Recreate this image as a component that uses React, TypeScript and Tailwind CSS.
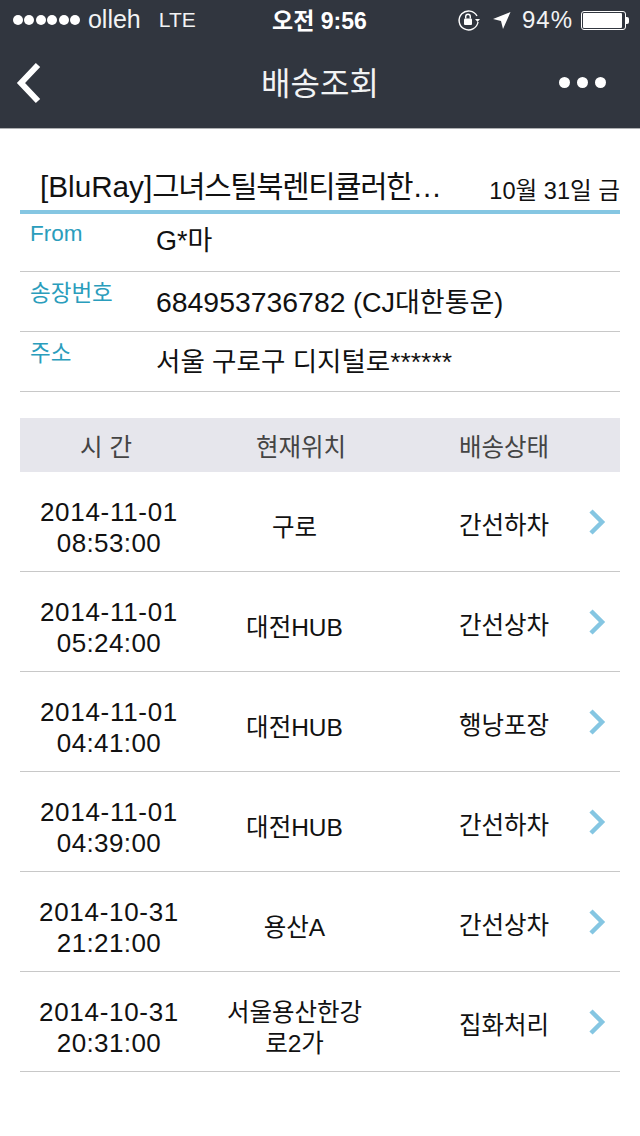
const rows = [
  { date: '2014-11-01', time: '08:53:00', place: ['구로'], status: '간선하차' },
  { date: '2014-11-01', time: '05:24:00', place: ['대전HUB'], status: '간선상차' },
  { date: '2014-11-01', time: '04:41:00', place: ['대전HUB'], status: '행낭포장' },
  { date: '2014-11-01', time: '04:39:00', place: ['대전HUB'], status: '간선하차' },
  { date: '2014-10-31', time: '21:21:00', place: ['용산A'], status: '간선상차' },
  { date: '2014-10-31', time: '20:31:00', place: ['서울용산한강', '로2가'], status: '집화처리' },
];

function InfoRow({ label, rowClass, labelClass, children }: { label: string; rowClass: string; labelClass: string; children: React.ReactNode }) {
  return (
    <div className={`flex border-b border-[#c8c8c8] ${rowClass}`}>
      <span className={`w-[136px] pl-[10px] text-[22.5px] leading-[30px] text-[#2a9dbc] ${labelClass}`}>{label}</span>
      {children}
    </div>
  );
}

function StatusBar() {
  return (
    <div className="flex h-10 items-center justify-between pl-[13px] pr-[11px] text-[24px] text-[#f2f3f4]">
      <div className="flex items-center">
        <div className="flex gap-[1.4px]">
          {[0, 1, 2, 3, 4, 5].map((i) => (
            <span key={i} className="h-2.5 w-2.5 rounded-full bg-white" />
          ))}
        </div>
        <span className="ml-2 text-[25px]">olleh</span>
        <span className="ml-[18px] text-[21px] font-light">LTE</span>
      </div>
      <div className="absolute left-[272px] top-[6px] text-[23px] font-bold leading-[30px] text-white">오전 9:56</div>
      <div className="flex items-center">
        <svg width="24" height="24" viewBox="0 0 24 24" fill="none" stroke="white" strokeWidth="1.4">
          <path d="M20 8A9.5 9.5 0 1 0 21 14" />
          <path d="M18 11h5l-2.5 3z" fill="white" stroke="none" />
          <rect x="7" y="10.5" width="8" height="6.5" rx="1" fill="white" stroke="none" />
          <path d="M8.7 10.5V8.5a2.3 2.3 0 0 1 4.6 0v2" />
        </svg>
        <svg className="ml-[11px]" width="19" height="19" viewBox="0 0 19 19">
          <path d="M18.5 1 L11 18 L9 10 L1 8 Z" fill="white" />
        </svg>
        <span className="ml-[11px] text-[24px] tracking-[1px]">94%</span>
        <div className="ml-[8px] flex items-center">
          <div className="h-[19px] w-[45px] rounded-[3px] border border-white p-[1px]">
            <div className="h-full w-[94%] rounded-[1px] bg-white" />
          </div>
          <div className="h-[7px] w-[3px] rounded-r-[2px] bg-white" />
        </div>
      </div>
    </div>
  );
}

function NavBar() {
  return (
    <div className="relative flex h-[88px] items-center justify-between pb-[3px] pl-[16px] pr-[34px]">
      <svg width="26" height="42" viewBox="0 0 26 42" fill="none" stroke="white" strokeWidth="6">
        <path d="M22 3 L5 21 L22 39" />
      </svg>
      <div className="absolute inset-x-0 top-[24px] text-center text-[32px] leading-[40px] text-[#f2f3f4]">배송조회</div>
      <div className="flex gap-[7px]">
        <span className="h-[11px] w-[11px] rounded-full bg-white" />
        <span className="h-[11px] w-[11px] rounded-full bg-white" />
        <span className="h-[11px] w-[11px] rounded-full bg-white" />
      </div>
    </div>
  );
}

export default function App() {
  return (
    <div
      className="relative h-[1136px] w-[640px] overflow-hidden bg-white"
      style={{ fontFamily: '"Liberation Sans", "Noto Sans CJK KR", sans-serif' }}
    >
      <div className="h-[129px] border-b border-[#aeb0b2] bg-[#31363f]">
        <StatusBar />
        <NavBar />
      </div>

      <div className="px-5 pt-[42px]">
        <div className="flex h-[43px] items-start justify-between border-b-4 border-[#85c6e2] pl-5">
          <span className="whitespace-nowrap text-[29.7px] leading-[32px] text-[#111]">
            [BluRay]<span className="tracking-[-1.3px]">그녀스틸북렌티큘러한…</span>
          </span>
          <span className="pt-[4px] text-[23.6px] leading-[32px] text-[#111]">10월 31일 금</span>
        </div>

        <InfoRow label="From" rowClass="h-[58px]" labelClass="pt-[5px]">
          <span className="pt-[10px] text-[27px] leading-[34px] text-[#111]">G*마</span>
        </InfoRow>
        <InfoRow label="송장번호" rowClass="h-[60px]" labelClass="pt-[7px]">
          <span className="pt-[13px] text-[27px] leading-[34px] text-[#111]">
            <span className="text-[28.4px]">684953736782</span> (CJ대한통운)
          </span>
        </InfoRow>
        <InfoRow label="주소" rowClass="h-[60px]" labelClass="pt-[7px]">
          <span className="pt-[13px] text-[26.5px] leading-[34px] text-[#111]">서울 구로구 디지털로******</span>
        </InfoRow>

        <div className="mt-[26px] flex h-[54px] items-center bg-[#e6e6ec] pt-[6px] text-[24.5px] text-[#444]">
          <span className="w-[180px] pr-2 text-center">시 간</span>
          <span className="w-[190px] pl-3 text-center">현재위치</span>
          <span className="w-[190px] pl-[38px] text-center">배송상태</span>
        </div>

        {rows.map((row, i) => (
          <div key={i} className="flex h-[100px] items-center border-b border-[#c8c8c8] text-[24.5px] leading-[31px] text-[#111]">
            <div className="w-[178px] pt-3 text-center text-[26px]">
              <div className="tracking-[0.7px]">{row.date}</div>
              <div className="tracking-[0.4px]">{row.time}</div>
            </div>
            <div className="w-[193px] pt-3 text-center">
              {row.place.map((p) => (
                <div key={p}>{p}</div>
              ))}
            </div>
            <div className="w-[189px] pl-[37px] pt-2 text-center">{row.status}</div>
            <svg className="ml-[8px]" width="18" height="26" viewBox="0 0 18 26" fill="none" stroke="#85c6e2" strokeWidth="4.5">
              <path d="M3 2 L14 13 L3 24" />
            </svg>
          </div>
        ))}
      </div>
    </div>
  );
}
